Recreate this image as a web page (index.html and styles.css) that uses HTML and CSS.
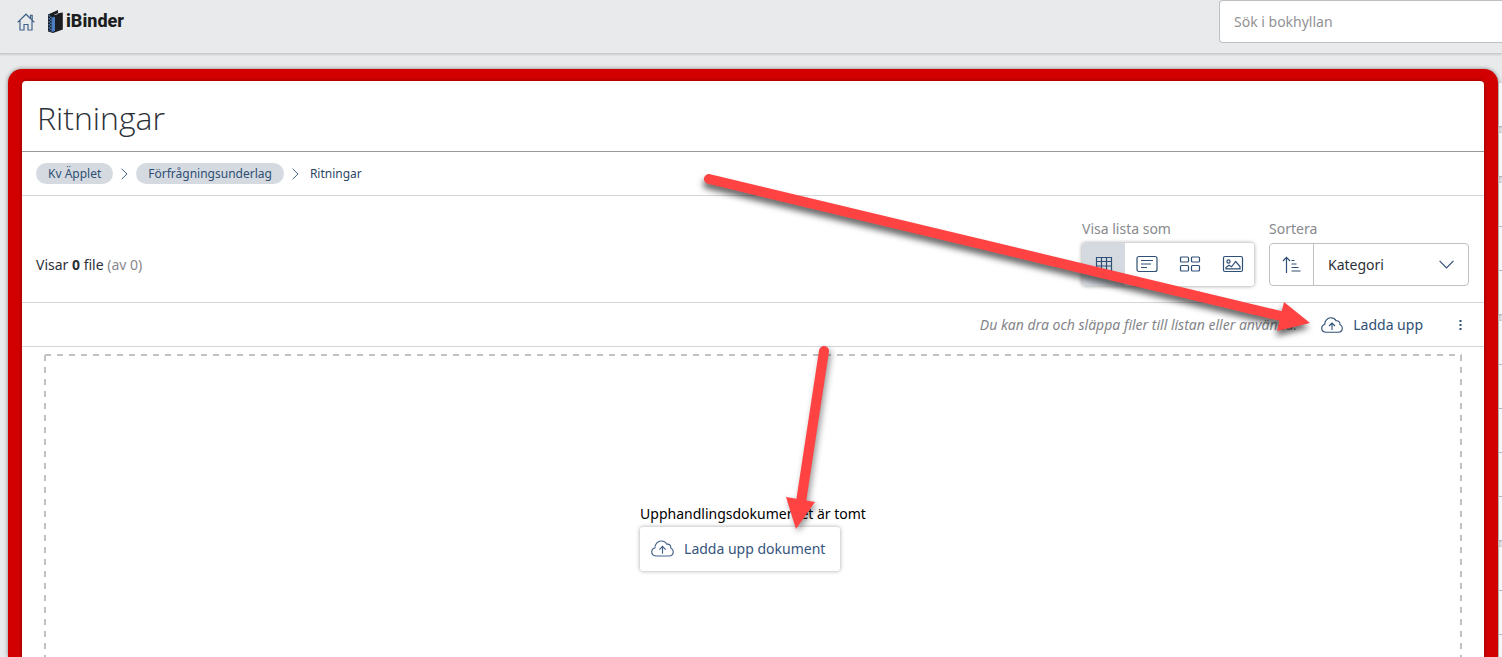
FILE: index.html
```html
<!DOCTYPE html>
<html lang="sv">
<head>
  <meta charset="UTF-8">
  <title>iBinder - Ritningar</title>
  <link rel="stylesheet" href="styles.css">
</head>
<body>

  <header class="topbar">
    <a class="home" href="#" aria-label="Hem">
      <svg width="18" height="18" viewBox="0 0 18 18" fill="none" stroke="#44638a" stroke-width="1.2">
        <path d="M.6 9.4 9 1.2l8.400 8.200M13.500 5.400V2.300h1.700v4.600M3 7.500v9.500h4v-5.500h4v5.500h4V7.500"/>
      </svg>
    </a>
    <a class="logo" href="#">
      <svg width="15" height="24" viewBox="0 0 15 24">
        <path fill="#1c1d20" d="M0 4.500 10 0v3.200l4.800-.8v17.200L5 23 0 21.500z"/>
        <path fill="#e9eaec" d="M6 4.800 10 3.200v.7L6.800 5z"/>
        <path fill="#4a7cc0" d="M3.600 7.600l3.400-.8v14.200l-3.400 1z"/>
        <path fill="none" stroke="#4a7cc0" stroke-width="1.400" stroke-dasharray="1.600 1.400" d="M1.200 5v15.500M2.800 6.500V22"/>
      </svg>
      <span>iBinder</span>
    </a>
    <input class="search" type="search" placeholder="Sök i bokhyllan" aria-label="Sök i bokhyllan">
  </header>

  <main class="workspace">
    <section class="frame">
      <div class="panel">
        <h1 class="title">Ritningar</h1>

        <nav class="breadcrumb">
          <a class="crumb" href="#">Kv Äpplet</a>
          <svg width="7" height="12" viewBox="0 0 7 12" fill="none" stroke="#44638a"><path d="M.6.800 6 6 .6 11.200"/></svg>
          <a class="crumb" href="#">Förfrågningsunderlag</a>
          <svg width="7" height="12" viewBox="0 0 7 12" fill="none" stroke="#44638a"><path d="M.6.800 6 6 .6 11.200"/></svg>
          <span class="current">Ritningar</span>
        </nav>

        <div class="toolbar">
          <p class="count">Visar <strong>0</strong> file <span>(av 0)</span></p>

          <div class="field">
            <span class="label" id="viewLabel">Visa lista som</span>
            <div class="views" role="group" aria-labelledby="viewLabel">
              <button class="active" type="button" aria-label="Tabell">
                <svg width="22" height="18" viewBox="0 0 22 18" fill="none" stroke="#2f5075" stroke-width="1.200">
                  <path d="M3.500 2.500h15v13h-15zM3.500 6.500h15M3.500 11h15M8.500 2.500v13M13.500 2.500v13"/>
                </svg>
              </button>
              <button type="button" aria-label="Lista">
                <svg width="22" height="18" viewBox="0 0 22 18" fill="none" stroke="#2f5075" stroke-width="1.200">
                  <rect x="1" y="1.500" width="20" height="15" rx="2"/>
                  <path d="M5 5.500h12M5 9h10M5 12.500h6"/>
                </svg>
              </button>
              <button type="button" aria-label="Kort">
                <svg width="22" height="18" viewBox="0 0 22 18" fill="none" stroke="#2f5075" stroke-width="1.200">
                  <rect x="1.500" y="2" width="8" height="5" rx="1"/><rect x="12.500" y="2" width="8" height="5" rx="1"/>
                  <rect x="1.500" y="10.500" width="8" height="5.500" rx="1"/><rect x="12.500" y="10.500" width="8" height="5.500" rx="1"/>
                </svg>
              </button>
              <button type="button" aria-label="Bilder">
                <svg width="22" height="18" viewBox="0 0 22 18" fill="none" stroke="#2f5075" stroke-width="1.200">
                  <rect x="1.500" y="1.500" width="19" height="15" rx="1.500"/>
                  <circle cx="6.500" cy="6.500" r="1.600"/>
                  <path d="M4 13.800v-1.300l3-2.200 2.500 1.500 4.200-5.300 4.300 5v2.300z"/>
                </svg>
              </button>
            </div>
          </div>

          <div class="field">
            <label class="label" for="sort">Sortera</label>
            <div class="sort">
              <button type="button" aria-label="Sorteringsordning">
                <svg width="20" height="18" viewBox="0 0 20 18" fill="none" stroke="#2f5075" stroke-width="1.200">
                  <path d="M4.500 17V1.500M1 5l3.500-3.600L8 5M9.500 4.500h3M9.500 8h5M9.500 11.500h7M9.500 15h9"/>
                </svg>
              </button>
              <div class="select">
                <select id="sort">
                  <option>Kategori</option>
                </select>
                <svg width="15" height="9" viewBox="0 0 15 9" fill="none" stroke="#2f5075" stroke-width="1.200"><path d="M.6.800 7.500 7.800 14.400.8"/></svg>
              </div>
            </div>
          </div>
        </div>

        <div class="actions">
          <em class="hint">Du kan dra och släppa filer till listan eller använda:</em>
          <button class="upload" type="button">
            <svg width="22" height="16" viewBox="0 0 22 16" fill="none" stroke="#2f5075" stroke-width="1.100">
              <path d="M5.500 15.200C2.500 15.200.7 13.500.7 11.200c0-1.900 1.200-3.300 3-3.700C3.700 3.800 6.300.8 9.800.8c2.500 0 4.300 1.100 5.300 3 2.500-.3 4.100 1.400 3.800 3.700 1.500.7 2.400 2 2.400 3.700 0 2.300-1.700 4-4.300 4zM11 13V6.200M8 9l3-3 3 3"/>
            </svg>
            Ladda upp
          </button>
          <button class="more" type="button" aria-label="Mer">
            <svg width="3" height="12" viewBox="0 0 3 12" fill="#2f5075"><path d="M.5 1h2v2h-2zM.5 5h2v2h-2zM.5 9h2v2h-2z"/></svg>
          </button>
        </div>

        <div class="dropzone">
          <div class="empty">
            <p>Upphandlingsdokumentet är tomt</p>
            <button class="upload-doc" type="button">
              <svg width="23" height="17" viewBox="0 0 22 16" fill="none" stroke="#44638a" stroke-width="1.100">
                <path d="M5.500 15.200C2.500 15.200.7 13.500.7 11.200c0-1.900 1.200-3.300 3-3.700C3.700 3.800 6.300.8 9.800.8c2.500 0 4.300 1.100 5.300 3 2.500-.3 4.100 1.400 3.800 3.700 1.500.7 2.400 2 2.400 3.700 0 2.300-1.700 4-4.300 4zM11 13V6.200M8 9l3-3 3 3"/>
              </svg>
              Ladda upp dokument
            </button>
          </div>
        </div>
      </div>
    </section>

    <!-- edge of the bookshelf behind the panel -->
    <aside class="shelf">
      <ul><li></li></ul>
      <ul><li></li></ul>
      <ul><li></li><li></li><li></li></ul>
      <ul><li></li><li></li><li></li><li></li><li></li></ul>
      <ul><li></li><li></li><li></li></ul>
    </aside>
  </main>

  <svg class="arrows" viewBox="0 0 1502 657" fill="#ff4343" stroke="#ff4343">
    <g class="arrow">
      <path d="M709 179 1285 317" stroke-width="10" stroke-linecap="round"/>
      <path d="M1284 302 1310 323 1277 331z" stroke="none"/>
    </g>
    <g class="arrow short">
      <path d="M824 351 801 502" stroke-width="10" stroke-linecap="round"/>
      <path d="M786 497 815 502 796 529z" stroke="none"/>
    </g>
  </svg>

</body>
</html>
```

FILE: styles.css
```css
* {
  box-sizing: border-box;
}

body {
  margin: 0;
  height: 100vh;
  display: flex;
  flex-direction: column;
  overflow: hidden;
  position: relative;
  background: #e9eaec;
  font-family: "Noto Sans", "Open Sans", sans-serif;
  font-size: 14px;
  line-height: 20px;
  color: #2c3038;
}

h1, p, ul {
  margin: 0;
  padding: 0;
  font-weight: normal;
}

svg {
  display: block;
  flex: none;
}

button, input, select {
  font: inherit;
  color: inherit;
  border: 0;
  background: none;
  padding: 0;
}

button {
  display: flex;
  align-items: center;
  justify-content: center;
  cursor: pointer;
}

.topbar {
  flex: none;
  display: flex;
  align-items: flex-start;
  height: 54px;
  padding-left: 17px;
  border-bottom: 1px solid #c9cacc;
  box-shadow: 0 1px 2px rgba(0, 0, 0, 0.12);
}

.home {
  padding: 13px 13px 0 0;
}

.logo {
  display: flex;
  gap: 3px;
  padding-top: 10px;
  color: #1c1d20;
  font-family: Roboto, sans-serif;
  font-size: 18px;
  font-weight: 800;
  line-height: 22px;
  text-decoration: none;
}

.search {
  width: 283px;
  height: 43px;
  margin-left: auto;
  padding: 0 14px;
  border: 1px solid #bfc0c4;
  border-right: 0;
  border-radius: 4px 0 0 4px;
  background: #fff;
}

.search::placeholder {
  color: #929296;
}

.workspace {
  flex: 1;
  min-height: 0;
  display: flex;
  gap: 1px;
  padding: 15px 0 0 8px;
}

.frame {
  flex: 1;
  padding: 12px 14px 0;
  background: #d20000;
  border-radius: 14px 14px 0 0;
  box-shadow: 0 0 4px rgba(0, 0, 0, 0.45);
}

.panel {
  height: 100%;
  overflow: hidden;
  background: #fff;
  border-radius: 4px 4px 0 0;
  box-shadow: 0 0 4px rgba(0, 0, 0, 0.35);
}

.title {
  padding: 15px 15px 11px;
  border-bottom: 1px solid #98999d;
  font-family: "Open Sans", sans-serif;
  font-size: 32px;
  font-weight: 300;
  line-height: 44px;
}

.breadcrumb {
  display: flex;
  align-items: center;
  gap: 8px;
  height: 44px;
  padding: 0 14px;
  border-bottom: 1px solid #d4d5d7;
  font-size: 12px;
  color: #2f5075;
}

.crumb {
  padding: 0 12px;
  border-radius: 11px;
  background: #d5dae1;
  color: #2f5075;
  line-height: 21px;
  text-decoration: none;
}

.current {
  padding-left: 3px;
  color: #2d4766;
  line-height: 21px;
}

.toolbar {
  display: flex;
  align-items: flex-end;
  gap: 15px;
  padding: 23px 15px 16px 14px;
  border-bottom: 1px solid #d4d5d7;
}

.count {
  margin-right: auto;
  line-height: 43px;
}

.count span,
.label {
  color: #88898d;
}

.field {
  display: flex;
  flex-direction: column;
  gap: 4px;
}

.views {
  display: flex;
  height: 43px;
  border-radius: 3px;
  background: #fff;
  box-shadow: 0 0 4px rgba(0, 0, 0, 0.4);
}

.views button {
  width: 43px;
  padding-bottom: 2px;
}

.views .active {
  background: #d5dae1;
  border-radius: 3px 0 0 3px;
}

.sort {
  display: flex;
  height: 43px;
  border: 1px solid #bfc0c4;
  border-radius: 4px;
}

.sort button {
  width: 44px;
  border-right: 1px solid #bfc0c4;
}

.select {
  display: grid;
  align-items: center;
  width: 154px;
}

.select select,
.select svg {
  grid-area: 1 / 1;
}

.select select {
  appearance: none;
  height: 100%;
  padding: 0 14px;
}

.select svg {
  justify-self: end;
  margin-right: 14px;
  pointer-events: none;
}

.actions {
  display: flex;
  align-items: center;
  justify-content: flex-end;
  height: 44px;
  padding-right: 22px;
  border-bottom: 1px solid #d4d5d7;
}

.hint {
  margin-right: 24px;
  color: #84858a;
}

.upload {
  gap: 10px;
  margin-right: 36px;
  color: #2f5075;
}

/* dashes are drawn as gradients to get the wider 6px gaps */
.dropzone {
  --across: linear-gradient(90deg, #c1c2c6 50%, transparent 50%);
  --down: linear-gradient(#c1c2c6 50%, transparent 50%);
  height: 366px;
  margin: 7px 22px;
  display: flex;
  align-items: center;
  justify-content: center;
  background:
    var(--across) 1px 0 / 12px 2px repeat-x,
    var(--across) 1px 100% / 12px 2px repeat-x,
    var(--down) 0 1px / 2px 12px repeat-y,
    var(--down) 100% 1px / 2px 12px repeat-y;
}

.empty {
  color: #000;
}

.upload-doc {
  gap: 10px;
  height: 44px;
  margin-top: 3px;
  padding: 0 15px 0 11px;
  border-radius: 3px;
  background: #fff;
  box-shadow: 0 0 4px rgba(0, 0, 0, 0.35);
  color: #35557c;
}

.shelf {
  flex: none;
  display: flex;
  flex-direction: column;
  gap: 6px;
  width: 3px;
  padding-top: 14px;
}

.shelf ul {
  flex: none;
  list-style: none;
  background: #f6f7f9;
  box-shadow: 0 0 2px rgba(0, 0, 0, 0.3);
}

.shelf li {
  height: 44px;
  border-bottom: 1px solid #b4b5b8;
}

.arrows {
  position: absolute;
  top: 0;
  left: 0;
  width: 100%;
  pointer-events: none;
}

.arrow {
  filter: drop-shadow(-1px 5px 3px rgba(0, 0, 0, 0.6));
}

.arrow.short {
  filter: drop-shadow(2px 3px 3px rgba(0, 0, 0, 0.4));
}
```
